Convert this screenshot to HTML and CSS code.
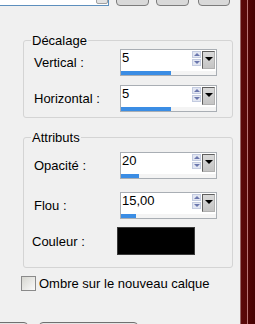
FILE: index.html
```html
<!DOCTYPE html>
<html lang="fr">
<head>
    <meta charset="UTF-8">
    <title>Ombre portée</title>
    <link rel="stylesheet" href="styles.css">
</head>
<body>
<div class="window">
    <div class="panel">
        <!--barre du haut, coupée-->
        <div class="toolbar">
            <div class="combo"><span class="combo-btn"></span></div>
            <div class="tbtn"></div>
            <div class="tbtn"></div>
            <div class="tbtn tbtn-last"></div>
        </div>

        <!--Décalage-->
        <fieldset class="group group-offset">
            <legend>Décalage</legend>
            <div class="row">
                <label class="lbl">Vertical :</label>
                <div class="spin">
                    <div class="spin-top">
                        <span class="value">5</span>
                        <span class="arrows"><i class="up"></i><i class="down"></i></span>
                        <span class="drop"></span>
                    </div>
                    <div class="track"><span class="bar" style="width:50px"></span></div>
                </div>
            </div>
            <div class="row">
                <label class="lbl">Horizontal :</label>
                <div class="spin">
                    <div class="spin-top">
                        <span class="value">5</span>
                        <span class="arrows"><i class="up"></i><i class="down"></i></span>
                        <span class="drop"></span>
                    </div>
                    <div class="track"><span class="bar" style="width:50px"></span></div>
                </div>
            </div>
        </fieldset>

        <!--Attributs-->
        <fieldset class="group group-attr">
            <legend>Attributs</legend>
            <div class="row">
                <label class="lbl">Opacité :</label>
                <div class="spin">
                    <div class="spin-top">
                        <span class="value">20</span>
                        <span class="arrows"><i class="up"></i><i class="down"></i></span>
                        <span class="drop"></span>
                    </div>
                    <div class="track"><span class="bar" style="width:18px"></span></div>
                </div>
            </div>
            <div class="row row-flou">
                <label class="lbl">Flou :</label>
                <div class="spin">
                    <div class="spin-top">
                        <span class="value">15,00</span>
                        <span class="arrows"><i class="up"></i><i class="down"></i></span>
                        <span class="drop"></span>
                    </div>
                    <div class="track"><span class="bar" style="width:15px"></span></div>
                </div>
            </div>
            <div class="row row-color">
                <label class="lbl lbl-color">Couleur :</label>
                <div class="swatch"></div>
            </div>
        </fieldset>

        <label class="check"><span class="box"></span>Ombre sur le nouveau calque</label>

        <!--boutons du bas, coupés-->
        <div class="buttons">
            <div class="btn btn-a"></div>
            <div class="btn btn-b"></div>
        </div>
    </div>
    <div class="frame"></div>
</div>
</body>
</html>
```

FILE: styles.css
```css
*{margin:0;padding:0;box-sizing:border-box;}
html,body{width:255px;height:324px;overflow:hidden;}
body{
    background:#f0f0f0;
    font:13px "Liberation Sans",Arial,sans-serif;
    color:#000;
}
.window{
    display:flex;
    height:324px;
}
.panel{
    width:240px;
    display:flex;
    flex-direction:column;
}
.frame{
    width:15px;
    background:linear-gradient(to right,#9a6a6a 0,#9a6a6a 1px,#5c0909 1px,#560707 7px,#b87474 7px,#b87474 8px,#520404 8px,#460101 15px);
}

/*barre du haut*/
.toolbar{
    height:6px;
    display:flex;
    align-items:flex-end;
    overflow:hidden;
}
.combo{
    width:109px;
    height:20px;
    display:flex;
    align-items:flex-end;
    justify-content:flex-end;
    background:#fff;
    border:1px solid #5d8fbd;
    border-left:none;
}
.combo-btn{
    width:12px;
    height:16px;
    margin:0 0 1px;
    background:#e2e2e2;
    border:1px solid #a0a0a0;
    border-radius:2px;
}
.tbtn{
    width:33px;
    height:20px;
    margin-left:7px;
    background:#d9d9d9;
    border:1px solid #7c7c7c;
    border-radius:4px;
}
.toolbar .tbtn:first-of-type{margin-left:6px;}
.tbtn-last{margin-left:9px;width:32px;}

/*groupes*/
.group{
    width:210px;
    margin-left:23px;
    border:1px solid #d4d4d4;
    border-radius:3px;
}
.group legend{
    margin-left:7px;
    padding:0 1px;
    line-height:15px;
}
.group-offset{
    margin-top:27px;
    padding:1px 0 5px;
}
.group-attr{
    margin-top:12px;
    padding:7px 0 12px;
}
.row{
    display:flex;
    align-items:center;
    padding-left:10px;
}
.row + .row{margin-top:9px;}
.row-flou{margin-top:13px !important;}
.row-color{margin-top:8px !important;}
.lbl{width:86px;}
.lbl-color{width:85px;margin-left:-2px;}

/*champ numérique*/
.spin{
    width:97px;
    height:27px;
    display:flex;
    flex-direction:column;
    background:#fff;
    border:1px solid #a9aeb4;
}
.spin-top{
    display:flex;
    height:18px;
    margin-top:1px;
}
.value{
    flex:1;
    padding-left:1px;
    line-height:14px;
}
.arrows{
    width:9px;
    margin-right:1px;
    display:flex;
    flex-direction:column;
    gap:1px;
}
.arrows i{
    height:7px;
    display:flex;
    align-items:center;
    justify-content:center;
    background:#e3e7f2;
    border:1px solid #c3cbe0;
}
.arrows i::before{
    content:'';
    border-left:3px solid transparent;
    border-right:3px solid transparent;
}
.arrows .up::before{border-bottom:3px solid #6b77ad;}
.arrows .down::before{border-top:3px solid #6b77ad;}
.drop{
    width:13px;
    height:18px;
    margin-right:1px;
    display:flex;
    justify-content:center;
    padding-top:5px;
    background:linear-gradient(#dadada,#c4c4c4);
    border:1px solid;
    border-color:#5e5e5e #b0b0b0 #b0b0b0 #5e5e5e;
}
.drop::before{
    content:'';
    width:0;
    height:0;
    border-left:4px solid transparent;
    border-right:4px solid transparent;
    border-top:4px solid #000;
}
.track{
    height:4px;
    margin-top:auto;
    background:#f4f4f4;
}
.bar{
    display:block;
    height:4px;
    background:#3b8de4;
}

.swatch{
    width:78px;
    height:28px;
    background:#000;
    border:1px solid #3a3a3a;
}

/*case à cocher*/
.check{
    display:flex;
    align-items:center;
    margin:8px 0 0 21px;
    line-height:15px;
}
.check .box{
    width:15px;
    height:15px;
    margin-right:3px;
    background:linear-gradient(135deg,#d6d6d0,#fafafa);
    border:1px solid #8a8a8a;
}

/*boutons du bas*/
.buttons{
    display:flex;
    height:2px;
    margin-top:auto;
    overflow:hidden;
}
.btn{
    height:23px;
    background:#e4e4e4;
    border:1px solid #707070;
    border-radius:4px;
}
.btn-a{width:38px;margin-left:-10px;}
.btn-b{width:99px;margin-left:11px;}
```
